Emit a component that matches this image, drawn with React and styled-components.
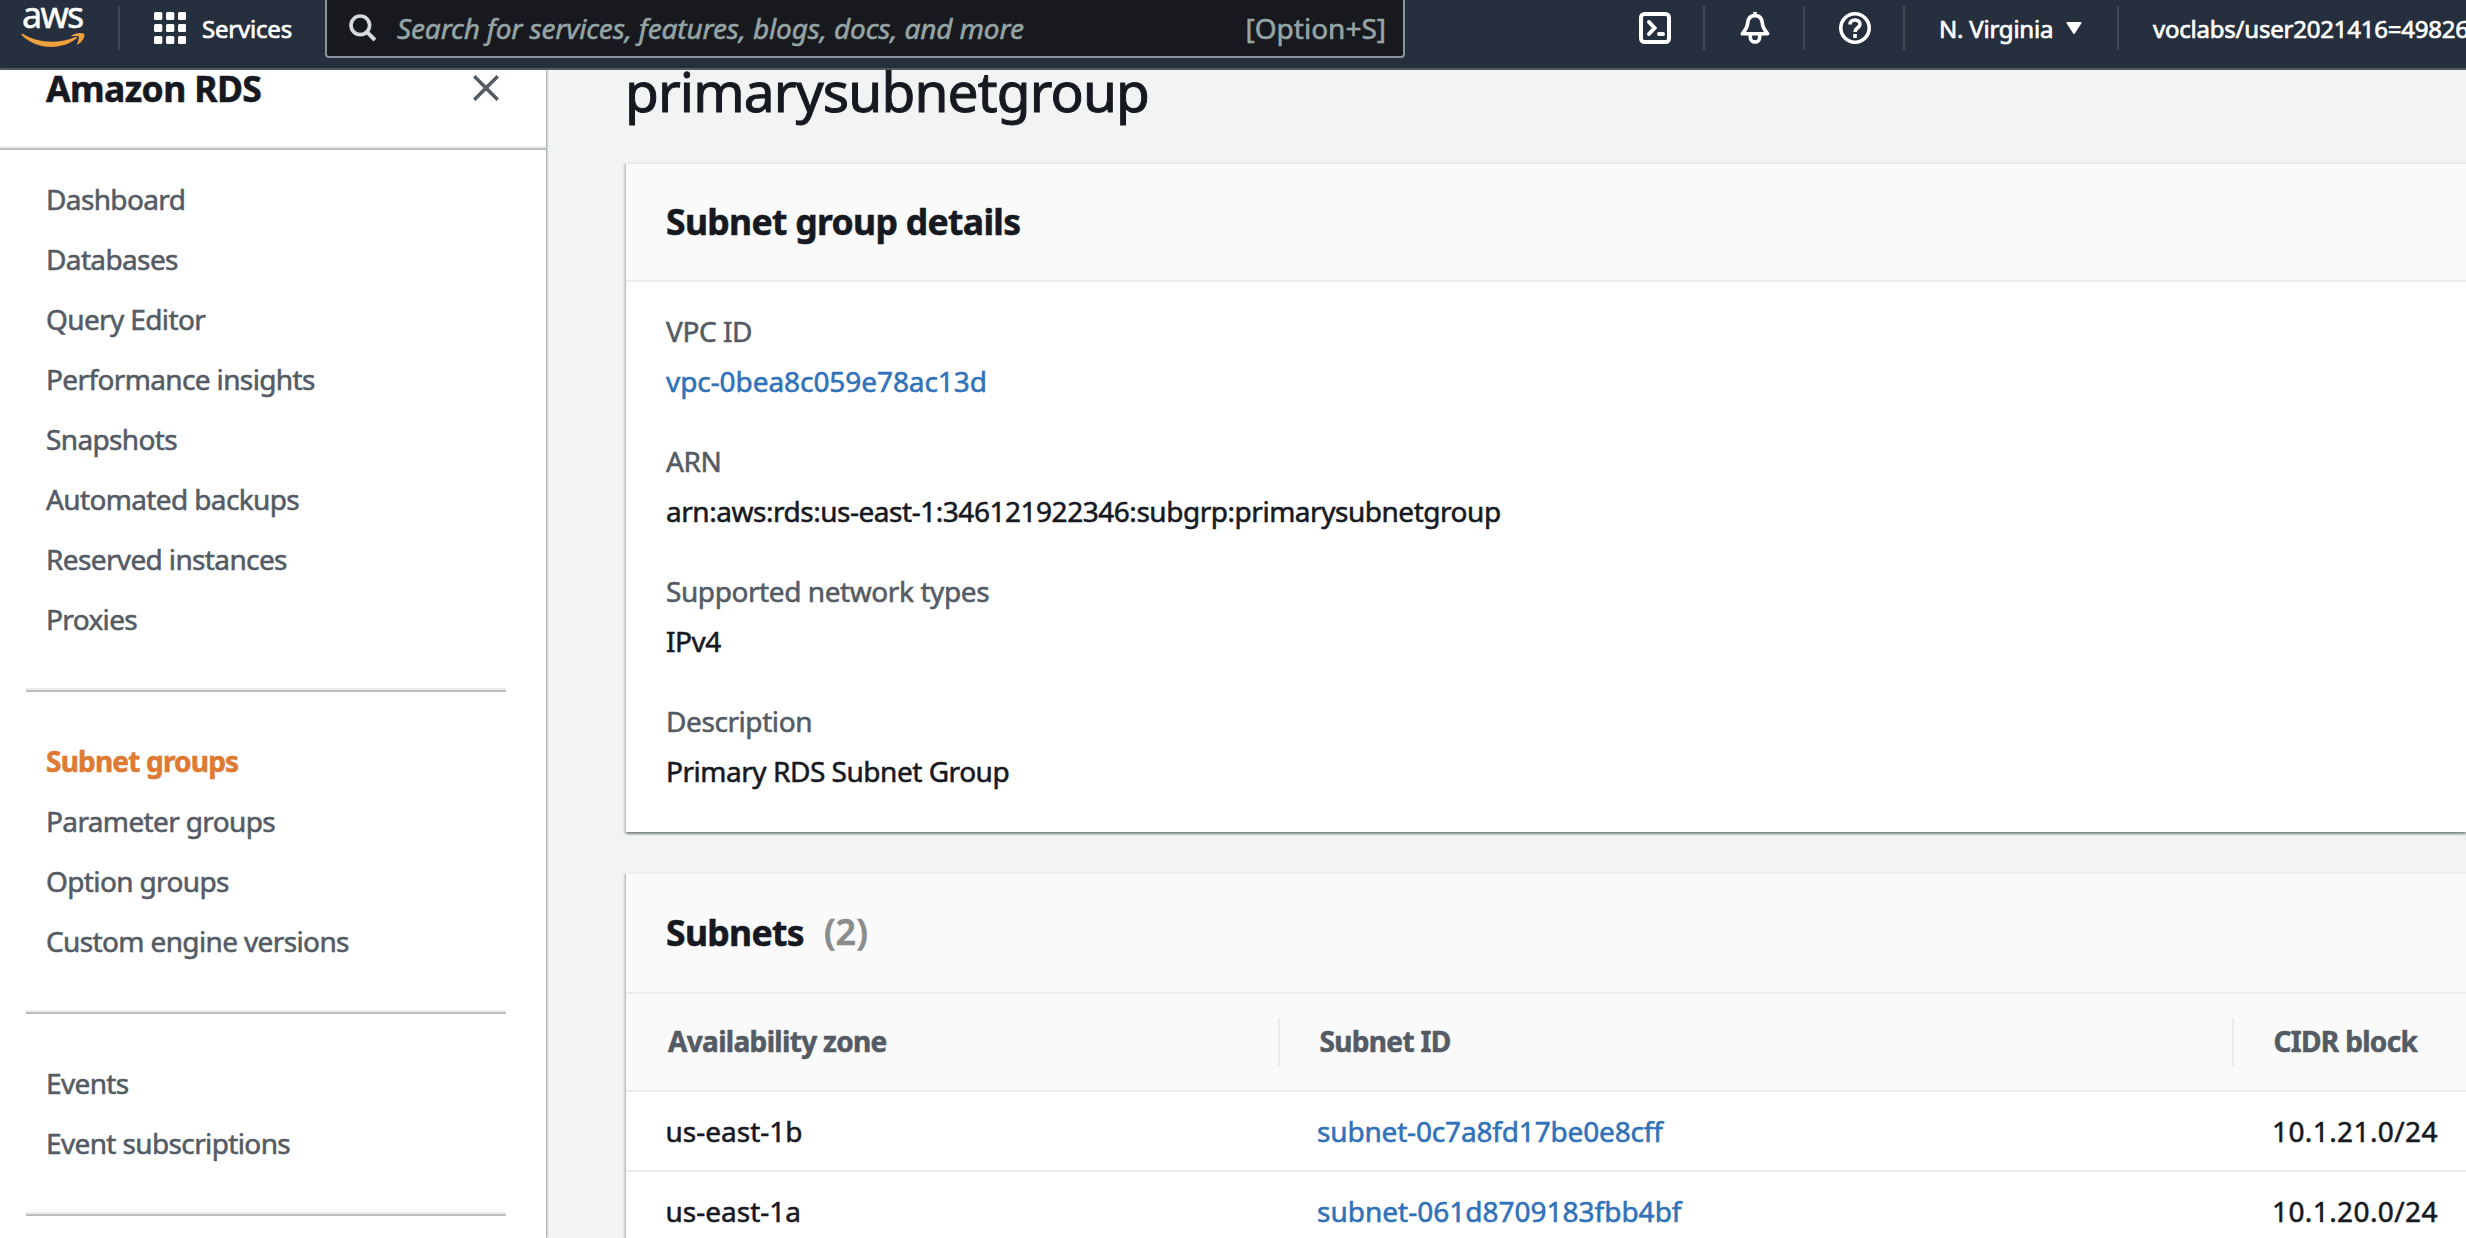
import React from 'react';
import styled, { createGlobalStyle } from 'styled-components';

const GlobalStyle = createGlobalStyle`
  * { box-sizing: border-box; }
  body {
    margin: 0;
    background: #f2f3f3;
    color: #16191f;
    font-family: "Noto Sans", "Open Sans", sans-serif;
    font-size: 28px;
    -webkit-text-stroke: 0.55px currentColor;
    overflow: hidden;
  }
  h1, h2, ul, dl, dd, p { margin: 0; padding: 0; }
  ul { list-style: none; }
  a { text-decoration: none; color: inherit; }
`;

const Page = styled.div`
  height: 1238px;
  display: flex;
  flex-direction: column;
  overflow: hidden;
`;

/* Top navigation */
const TopBar = styled.header`
  flex: none;
  height: 70px;
  display: flex;
  align-items: flex-start;
  background: #252f3e;
  border-bottom: 2px solid #545b64;
  color: #fff;
  font-size: 24px;
  overflow: hidden;
  white-space: nowrap;
`;

const Logo = styled.a`
  width: 118px;
  height: 56px;
  flex: none;
  padding: 0 0 0 21px;
  display: flex;
  flex-direction: column;
`;

const LogoText = styled.span`
  height: 33px;
  padding-left: 1px;
  font-size: 36px;
  line-height: 29px;
  letter-spacing: -1.8px;
`;

const Separator = styled.span`
  flex: none;
  width: 2px;
  height: 44px;
  margin-top: 6px;
  background: #414750;
`;

const Services = styled.button`
  width: 205px;
  height: 56px;
  flex: none;
  display: flex;
  align-items: center;
  gap: 16px;
  padding: 0 0 0 34px;
  border: 0;
  background: none;
  color: inherit;
  font: inherit;
  letter-spacing: -0.2px;
  -webkit-text-stroke: 0.7px currentColor;
`;

const Search = styled.div`
  width: 1080px;
  height: 58px;
  flex: none;
  display: flex;
  align-items: center;
  padding: 0 17px 0 22px;
  border: 2px solid #87959a;
  border-top: 0;
  border-radius: 0 0 4px 4px;
  background: #18191e;
  color: #95a5a6;
  font-size: 28px;
`;

const Placeholder = styled.span`
  flex: 1;
  margin-left: 20px;
  font-style: italic;
  letter-spacing: -0.13px;
`;

const Utilities = styled.nav`
  margin-left: auto;
  width: 861px;
  display: flex;
`;

const IconCell = styled.span`
  width: 98px;
  height: 56px;
  flex: none;
  display: flex;
  align-items: center;
  padding-left: 34px;
`;

const MenuCell = styled.span`
  width: ${(p) => p.$width};
  height: 56px;
  flex: none;
  display: flex;
  align-items: center;
  gap: 13px;
  padding-left: 34px;
  overflow: hidden;
  letter-spacing: -0.22px;
  -webkit-text-stroke: 0.7px currentColor;
`;

/* Body */
const Body = styled.div`
  flex: 1;
  min-height: 0;
  display: flex;
`;

const Sidebar = styled.aside`
  width: 546px;
  flex: none;
  background: #fff;
  box-shadow: 1px 0 2px rgba(0, 28, 36, 0.4);
`;

const SidebarHead = styled.div`
  height: 76px;
  display: flex;
  justify-content: space-between;
  padding: 0 47px 0 46px;
`;

const SidebarTitle = styled.h2`
  font-size: 35.5px;
  font-weight: 700;
  line-height: 36px;
  letter-spacing: -0.6px;
`;

const CloseIcon = styled.svg`
  width: 26px;
  height: 26px;
  margin-top: 5px;
`;

const Rule = styled.div`
  height: 4px;
  margin: ${(p) => (p.$inset ? '0 40px 0 26px' : '0')};
  border-top: 2px solid #eaeded;
  background: #bcbfbf;
`;

const NavGroup = styled.ul`
  padding: ${(p) => (p.$first ? '19px' : '39px')} 0 39px 46px;
`;

const NavItem = styled.li`
  line-height: 60px;
  color: ${(p) => (p.$active ? '#de7a32' : '#545b64')};
  font-weight: ${(p) => (p.$active ? 700 : 400)};
  letter-spacing: ${(p) => (p.$active ? '-0.8px' : '-0.63px')};
`;

const Main = styled.main`
  flex: 1;
  min-width: 0;
  padding-left: 80px;
`;

const Title = styled.h1`
  margin: 0 0 50px -1px;
  font-size: 55px;
  font-weight: 400;
  line-height: 42px;
  letter-spacing: -0.85px;
  -webkit-text-stroke: 1px currentColor;
`;

const Card = styled.section`
  margin-bottom: 40px;
  border-top: 2px solid #eaeded;
  background: #fff;
  box-shadow: 0 2px 2px rgba(0, 28, 36, 0.3), 2px 2px 2px rgba(0, 28, 36, 0.15),
    -2px 2px 2px rgba(0, 28, 36, 0.15);
`;

const CardHead = styled.div`
  height: ${(p) => p.$height};
  display: flex;
  align-items: center;
  gap: 20px;
  padding: 0 40px 3px;
  border-bottom: 2px solid #eaeded;
  background: #fafafa;
`;

const CardTitle = styled.h2`
  font-size: 35.5px;
  font-weight: 700;
  line-height: 44px;
  letter-spacing: -0.67px;
`;

const Count = styled.span`
  color: #8a8b8c;
  font-size: 36px;
  font-weight: 600;
  line-height: 44px;
`;

const Details = styled.dl`
  height: 550px;
  padding: 27px 40px 39px;
  display: flex;
  flex-direction: column;
  gap: 36px;
`;

const Field = styled.div`
  display: flex;
  flex-direction: column;
  gap: 6px;
  line-height: 44px;
`;

const Label = styled.dt`
  color: #545b64;
  letter-spacing: -0.42px;
`;

const Value = styled.dd`
  color: ${(p) => (p.$link ? '#2f72b9' : '#16191f')};
  letter-spacing: ${(p) => (p.$link ? '-0.07px' : '-0.47px')};
`;

const Row = styled.div`
  height: 80px;
  display: grid;
  grid-template-columns: 654px 954px 1fr;
  align-items: center;
  border-bottom: 2px solid #eaeded;
`;

const HeadRow = styled(Row)`
  height: 98px;
  background: #fafafa;
`;

const HeadCell = styled.div`
  height: 48px;
  padding-left: ${(p) => (p.$first ? '42px' : '39.5px')};
  border-right: ${(p) => (p.$last ? '0' : '2px solid #eaeded')};
  color: #545b64;
  font-weight: 700;
  line-height: 46px;
  letter-spacing: -0.67px;
`;

const Cell = styled.div`
  padding-left: ${(p) => (p.$first ? '39.5px' : p.$link ? '37px' : '38px')};
  color: ${(p) => (p.$link ? '#2f72b9' : '#16191f')};
  letter-spacing: ${(p) => (p.$numeric ? '0.4px' : '0')};
  white-space: nowrap;
`;

const SubnetLink = styled.a`
  letter-spacing: ${(p) => p.$tracking};
`;

const primaryLinks = [
  'Dashboard',
  'Databases',
  'Query Editor',
  'Performance insights',
  'Snapshots',
  'Automated backups',
  'Reserved instances',
  'Proxies',
];
const groupLinks = ['Subnet groups', 'Parameter groups', 'Option groups', 'Custom engine versions'];
const eventLinks = ['Events', 'Event subscriptions'];

const fields = [
  { label: 'VPC ID', value: 'vpc-0bea8c059e78ac13d', link: true },
  { label: 'ARN', value: 'arn:aws:rds:us-east-1:346121922346:subgrp:primarysubnetgroup' },
  { label: 'Supported network types', value: 'IPv4' },
  { label: 'Description', value: 'Primary RDS Subnet Group' },
];

const subnets = [
  { zone: 'us-east-1b', id: 'subnet-0c7a8fd17be0e8cff', cidr: '10.1.21.0/24', tracking: '-0.17px' },
  { zone: 'us-east-1a', id: 'subnet-061d8709183fbb4bf', cidr: '10.1.20.0/24', tracking: '0' },
];

const Smile = () => (
  <svg width="65" height="15" viewBox="0 0 65 15" fill="#f0a03c">
    <path d="M1.6 0.8C10 6 20 8.800 31 8.800c8 0 16.500-1.800 23.500-4.900 1.200-.5 2.100.8 1 1.700C49 10.800 40 14 30.500 14 19 14 8.500 9.600.8 2.200.2 1.500.8.400 1.600.800Z" />
    <path d="M57.200 11.300c-.7.600-1.400.3-1.100-.500.8-2 2.400-6.300 1.600-7.300-.8-1-5-.5-6.900-.200-.6.100-.7-.500-.1-.900C54.200 0 60-.7 62.900.700c1.800 1.400-.700 7.700-5.700 10.600Z" />
  </svg>
);

const GridIcon = () => (
  <svg width="32" height="32" viewBox="0 0 32 32" fill="#fff">
    {[0, 12, 24].map((y) =>
      [0, 12, 24].map((x) => <rect key={`${x}-${y}`} x={x} y={y} width="8.300" height="8" rx="1.500" />)
    )}
  </svg>
);

const SearchIcon = () => (
  <svg width="28" height="28" viewBox="0 0 28 28" fill="none" stroke="#d5dbdb" strokeWidth="3.600">
    <circle cx="11.300" cy="11.300" r="9.300" />
    <path d="M17.800 17.800 26 26" strokeWidth="4" />
  </svg>
);

const TerminalIcon = () => (
  <svg width="32" height="32" viewBox="0 0 32 32" fill="none" stroke="#fff" strokeWidth="4">
    <rect x="2" y="2" width="28" height="28" rx="3.500" />
    <path d="M10 10l5.500 6-5.500 6" strokeLinecap="round" />
    <path d="M20 22h4" strokeLinecap="round" strokeWidth="4" />
  </svg>
);

const BellIcon = () => (
  <svg width="32" height="32" viewBox="0 0 32 32" fill="none" stroke="#fff" strokeWidth="3.600">
    <path d="M16 3.600c-4.800 0-7 3.400-7.300 7.400C8.300 16 6 18.500 3.300 21.800h25.400C26 18.500 23.700 16 23.300 11 23 7 20.800 3.600 16 3.600Z" strokeLinejoin="round" />
    <path d="M16 0v4" />
    <path d="M11.300 23v2.300a4.700 4.700 0 0 0 9.400 0V23" />
  </svg>
);

const HelpIcon = () => (
  <svg width="32" height="32" viewBox="0 0 32 32" fill="none" stroke="#fff" strokeWidth="3.600">
    <circle cx="16" cy="16" r="14.200" />
    <path d="M11 12.500C11 9.700 13 8 16 8s5 1.700 5 4.300c0 3.500-5 3.500-5 7.700" />
    <path d="M16 22v4" />
  </svg>
);

const Caret = () => (
  <svg width="16" height="12" viewBox="0 0 16 12" fill="#fff">
    <path d="M1.500 0h13c1 0 1.200.8.800 1.500L8.800 11.400c-.4.700-1.200.7-1.600 0L.7 1.500C.3.800.5 0 1.500 0Z" />
  </svg>
);

const Navigation = ({ items, first }) => (
  <NavGroup $first={first}>
    {items.map((item) => (
      <NavItem key={item} $active={item === 'Subnet groups'}>
        <a>{item}</a>
      </NavItem>
    ))}
  </NavGroup>
);

export default function App() {
  return (
    <Page>
      <GlobalStyle />
      <TopBar>
        <Logo>
          <LogoText>aws</LogoText>
          <Smile />
        </Logo>
        <Separator />
        <Services>
          <GridIcon />
          Services
        </Services>
        <Search>
          <SearchIcon />
          <Placeholder>Search for services, features, blogs, docs, and more</Placeholder>
          <span>[Option+S]</span>
        </Search>
        <Utilities>
          <IconCell><TerminalIcon /></IconCell>
          <Separator />
          <IconCell><BellIcon /></IconCell>
          <Separator />
          <IconCell><HelpIcon /></IconCell>
          <Separator />
          <MenuCell $width="212px">
            N. Virginia
            <Caret />
          </MenuCell>
          <Separator />
          <MenuCell $width="347px">voclabs/user2021416=49826</MenuCell>
        </Utilities>
      </TopBar>
      <Body>
        <Sidebar>
          <SidebarHead>
            <SidebarTitle>Amazon RDS</SidebarTitle>
            <CloseIcon viewBox="0 0 26 26" fill="none" stroke="#545b64" strokeWidth="3.600">
              <path d="M1.300 1.300 24.700 24.700M24.700 1.300 1.300 24.700" />
            </CloseIcon>
          </SidebarHead>
          <Rule />
          <Navigation items={primaryLinks} first />
          <Rule $inset />
          <Navigation items={groupLinks} />
          <Rule $inset />
          <Navigation items={eventLinks} />
          <Rule $inset />
        </Sidebar>
        <Main>
          <Title>primarysubnetgroup</Title>
          <Card>
            <CardHead $height="118px">
              <CardTitle>Subnet group details</CardTitle>
            </CardHead>
            <Details>
              {fields.map((f) => (
                <Field key={f.label}>
                  <Label>{f.label}</Label>
                  <Value $link={f.link}>{f.value}</Value>
                </Field>
              ))}
            </Details>
          </Card>
          <Card>
            <CardHead $height="120px">
              <CardTitle>Subnets</CardTitle>
              <Count>(2)</Count>
            </CardHead>
            <HeadRow>
              <HeadCell $first>Availability zone</HeadCell>
              <HeadCell>Subnet ID</HeadCell>
              <HeadCell $last>CIDR block</HeadCell>
            </HeadRow>
            {subnets.map((s) => (
              <Row key={s.id}>
                <Cell $first>{s.zone}</Cell>
                <Cell $link>
                  <SubnetLink $tracking={s.tracking}>{s.id}</SubnetLink>
                </Cell>
                <Cell $numeric>{s.cidr}</Cell>
              </Row>
            ))}
          </Card>
        </Main>
      </Body>
    </Page>
  );
}
